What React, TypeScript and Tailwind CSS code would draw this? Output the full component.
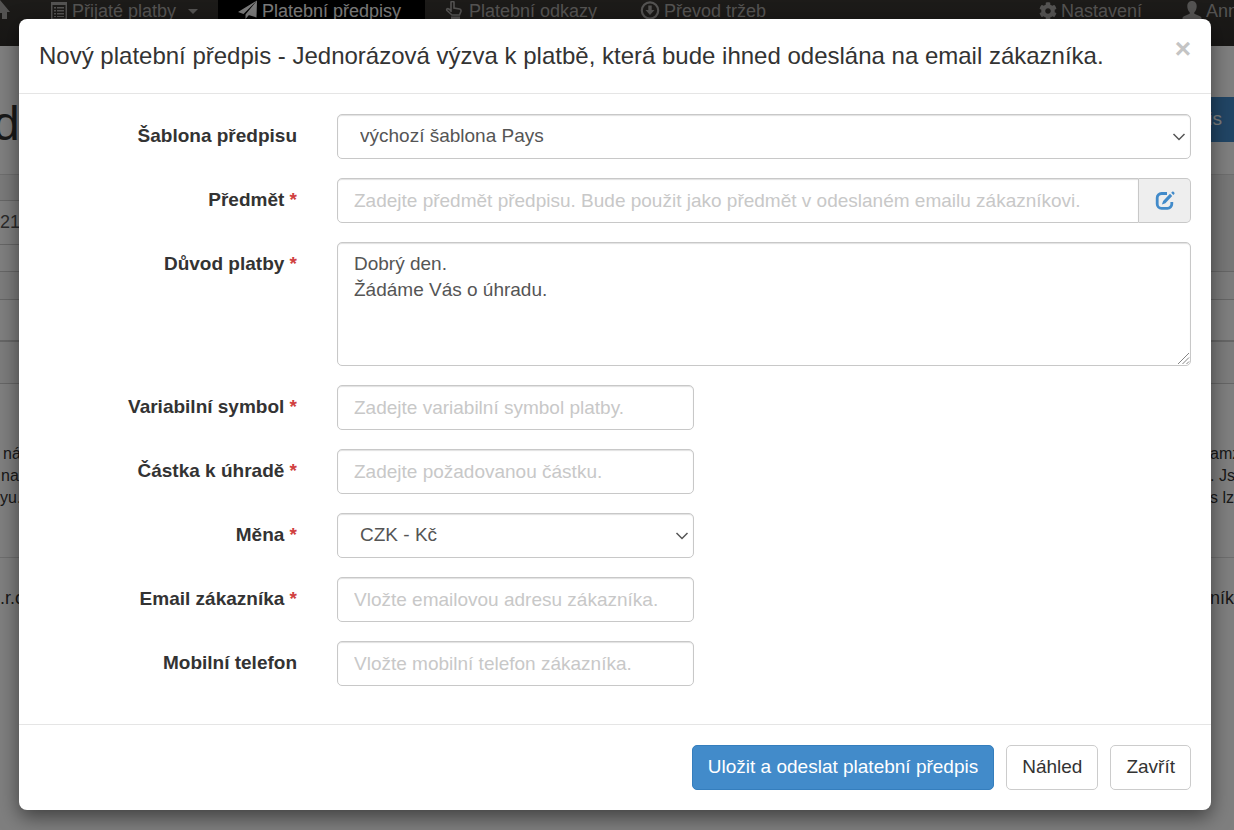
import React from "react";
import { FaCog } from "react-icons/fa";

const control =
  "block w-full h-[45px] rounded-[5px] border border-[#c8c8c8] bg-white px-4 text-[19px] text-[#555] shadow-[inset_0_1px_1px_rgba(0,0,0,0.12)] placeholder:text-[#c8c8c8] placeholder:opacity-100 outline-none focus:border-[#66afe9]";

const button =
  "h-[45px] rounded-[5px] border px-[15px] text-[19px] whitespace-nowrap";

function HomeIcon() {
  return (
    <svg viewBox="0 0 20 20" className="h-5 w-5 fill-current">
      <path d="M10 0 0 12h3v7h5v-6h4v6h5v-7h3z" />
    </svg>
  );
}

function ListIcon() {
  return (
    <svg viewBox="0 0 18 18" className="h-[18px] w-[18px] shrink-0 fill-current">
      <path fillRule="evenodd" d="M1 0h16v18H1zM2.500 3v13.500h13V3z" />
      <path d="M4 5h2v1.500H4zM7 5h7v1.500H7zM4 8h2v1.500H4zM7 8h7v1.500H7zM4 11h2v1.500H4zM7 11h7v1.500H7zM4 14h2v1H4zM7 14h7v1H7z" />
    </svg>
  );
}

function SendIcon() {
  return (
    <svg viewBox="0 0 20 20" className="h-5 w-5 shrink-0 fill-current">
      <path d="M19 0.500 0 12l5.500 2zM19 0.500 7.500 14.500V19l3-3.500zM19 0.500 10.500 15l8 2.500z" />
    </svg>
  );
}

function HandIcon() {
  return (
    <svg viewBox="0 0 20 20" className="h-5 w-5 shrink-0">
      <path
        d="M6 11V1.500C6 0 9 0 9 1.500V7l5.500 1c1.300.3 1.700 1 1.500 2.200L14.500 14H7L2 9.500c-1-1.200.6-2.400 1.700-1.500L6 9.500"
        fill="none"
        stroke="currentColor"
        strokeWidth="1.600"
      />
      <path fill="currentColor" d="M6 15.500h9V19H6z" />
    </svg>
  );
}

function DownloadIcon() {
  return (
    <svg viewBox="0 0 20 20" className="h-5 w-5 shrink-0">
      <circle cx="10" cy="9.500" r="8.200" fill="none" stroke="currentColor" strokeWidth="2.200" />
      <path fill="currentColor" d="M8.300 4.500h3.400V9H14.500L10 14 5.500 9h2.800z" />
    </svg>
  );
}

function UserIcon() {
  return (
    <svg viewBox="0 0 20 20" className="h-5 w-5 shrink-0 fill-current">
      <path d="M10 0c3 0 4.700 2.200 4.700 5.200 0 2.600-1 4.800-2.400 6v1.500l5.700 2.600c1 .5 1.500 1 1.500 2.200v1H.5v-1c0-1.200.5-1.700 1.500-2.200l5.700-2.600v-1.500c-1.400-1.200-2.400-3.400-2.400-6 0-3 1.700-5.200 4.700-5.200z" />
    </svg>
  );
}

function EditIcon() {
  return (
    <svg viewBox="0 0 20 20" className="h-5 w-5">
      <path
        d="M12 2.500H6.500A4.300 4.300 0 0 0 2.200 6.800v6.200A4.300 4.300 0 0 0 6.500 17.300h6A4.300 4.300 0 0 0 16.800 13v-2"
        fill="none"
        stroke="currentColor"
        strokeWidth="2.800"
      />
      <path fill="currentColor" d="M15 2.800 17.200 5l-6.800 7.300-3.500 1.200 1.200-3.500zM16.200 1.800l1-1c.4-.4.900-.4 1.300 0l.8.8c.4.400.4.900 0 1.300l-1 1z" />
    </svg>
  );
}

function Chevron() {
  return (
    <svg
      viewBox="0 0 14 14"
      className="pointer-events-none absolute top-4 right-[5px] h-[14px] w-[14px]"
    >
      <path d="M1.500 4 7 9.500 12.500 4" fill="none" stroke="#555" strokeWidth="1.500" />
    </svg>
  );
}

function ResizeGrip() {
  return (
    <svg viewBox="0 0 14 14" className="pointer-events-none absolute right-px bottom-px h-[14px] w-[14px]">
      <path d="M2 13 13 2M6.500 13 13 6.500M10.500 13 13 10.500" fill="none" stroke="#777" strokeWidth="0.900" />
    </svg>
  );
}

function Row({
  id,
  label,
  required,
  wide,
  children,
}: {
  id: string;
  label: string;
  required?: boolean;
  wide?: boolean;
  children: React.ReactNode;
}) {
  return (
    <div className="flex">
      <label
        htmlFor={id}
        className="w-3/12 px-5 pt-[9px] text-right text-[19px] leading-[26px] font-bold text-[#333]"
      >
        {label}
        {required && <span className="text-[#d04040]"> *</span>}
      </label>
      <div className={wide ? "w-9/12 px-5" : "w-4/12 px-5"}>{children}</div>
    </div>
  );
}

function BackgroundPage() {
  return (
    <div aria-hidden="true" className="absolute inset-0 overflow-hidden bg-white text-[#333]">
      <nav className="flex h-[46px] items-start justify-between bg-gradient-to-b from-[#3a3733] to-[#302e2b] text-[18px] leading-[22px] whitespace-nowrap text-[#a8a6a4]">
        <div className="flex h-full">
          <span className="-ml-[10px] w-[60px]"><HomeIcon /></span>
          <span className="flex h-[22px] w-[168px] items-center gap-1">
            <ListIcon />
            Přijaté platby
            <i className="ml-2 border-x-[5px] border-t-[5px] border-x-transparent border-t-current" />
          </span>
          <span className="flex h-full w-[207px] items-start gap-1 bg-black pl-5 text-[#f5f5f5]">
            <SendIcon />
            Platební předpisy
          </span>
          <span className="flex h-[22px] w-[195px] items-center gap-1 pl-5">
            <HandIcon />
            Platební odkazy
          </span>
          <span className="flex h-[22px] items-center gap-1 pl-5">
            <DownloadIcon />
            Převod tržeb
          </span>
        </div>
        <div className="-mr-1 flex">
          <span className="flex h-[22px] items-center gap-1 pr-10">
            <FaCog className="h-[18px] w-[18px]" />
            Nastavení
          </span>
          <span className="flex h-[22px] items-center gap-1">
            <UserIcon />
            Ann
          </span>
        </div>
      </nav>
      <div className="flex h-[129px] items-start justify-between border-b border-[#ddd] pt-[51px]">
        <span className="-mt-2 -ml-[7px] text-[48px] leading-[70px]">d</span>
        <span className="flex h-[45px] w-20 items-center justify-end bg-[#428bca] pr-3 text-[19px] text-white">
          is
        </span>
      </div>
      <div className="flex h-[97px] justify-between border-b border-[#ccc]">
        <div className="w-1/2">
          <div className="h-[26px] border-b border-[#ccc] bg-[#f5f5f5]" />
          <div className="flex h-[44px] items-center border-b border-[#ccc] text-[18px] text-[#555]">21</div>
        </div>
        <div className="w-1/2 bg-[#eee]" />
      </div>
      <div className="h-7 border-b border-[#ccc] bg-[#f9f9f9]" />
      <div className="h-[42px] border-b-2 border-[#ccc]" />
      <div className="h-[42px] border-b border-[#ccc] bg-[#f9f9f9]" />
      <div className="flex h-[174px] justify-between border-b border-[#ddd] pt-[59px] text-[16px] leading-[22px] whitespace-pre">
        <div>
          <p className="pl-[3px]">ná</p>
          <p className="pl-[1px]">na</p>
          <p>yu.</p>
        </div>
        <div className="w-6">
          <p>amz</p>
          <p>. Js</p>
          <p>s lz</p>
        </div>
      </div>
      <div className="flex justify-between pt-[27px] text-[18px] leading-[26px]">
        <span>.r.o</span>
        <span className="w-6">ník</span>
      </div>
    </div>
  );
}

export default function App() {
  return (
    <div className="relative min-h-screen font-['Liberation_Sans',Arial,sans-serif]">
      <BackgroundPage />
      <div className="relative min-h-screen bg-black/50 pt-[19px] pr-[23px] pb-5 pl-[19px]">
        <form
          role="dialog"
          aria-labelledby="dialog-title"
          onSubmit={(e) => e.preventDefault()}
          className="rounded-lg bg-white shadow-[0_7px_20px_rgba(0,0,0,0.5)]"
        >
          <header className="flex items-start justify-between border-b border-[#e5e5e5] px-5 pt-5 pb-5">
            <h4 id="dialog-title" className="text-[24px] leading-[34px] text-[#333]">
              Nový platební předpis - Jednorázová výzva k platbě, která bude ihned odeslána na email zákazníka.
            </h4>
            <button type="button" aria-label="Zavřít okno" className="text-[28px] leading-5 font-bold text-[#c4c4c4]">
              ×
            </button>
          </header>

          <div className="flex flex-col gap-[19px] pt-5 pb-[38px]">
            <Row id="template" label="Šablona předpisu" wide>
              <div className="relative">
                <select id="template" className={control + " appearance-none pl-[22px]"}>
                  <option>výchozí šablona Pays</option>
                </select>
                <Chevron />
              </div>
            </Row>
            <Row id="subject" label="Předmět" required wide>
              <div className="flex">
                <input
                  id="subject"
                  className={control + " rounded-r-none"}
                  placeholder="Zadejte předmět předpisu. Bude použit jako předmět v odeslaném emailu zákazníkovi."
                />
                <button
                  type="button"
                  aria-label="Upravit předmět"
                  className="flex h-[45px] w-[52px] shrink-0 items-center justify-center rounded-r-[5px] border border-l-0 border-[#c8c8c8] bg-[#eee] text-[#428bca]"
                >
                  <EditIcon />
                </button>
              </div>
            </Row>
            <Row id="reason" label="Důvod platby" required wide>
              <div className="relative">
                <textarea
                  id="reason"
                  defaultValue={"Dobrý den.\nŽádáme Vás o úhradu."}
                  className="block h-[124px] w-full resize-y rounded-[5px] border border-[#c8c8c8] bg-white px-4 py-2 text-[19px] leading-[26px] text-[#555] shadow-[inset_0_1px_1px_rgba(0,0,0,0.12)] outline-none [&::-webkit-resizer]:bg-transparent"
                />
                <ResizeGrip />
              </div>
            </Row>
            <Row id="symbol" label="Variabilní symbol" required>
              <input id="symbol" className={control} placeholder="Zadejte variabilní symbol platby." />
            </Row>
            <Row id="amount" label="Částka k úhradě" required>
              <input id="amount" className={control} placeholder="Zadejte požadovanou částku." />
            </Row>
            <Row id="currency" label="Měna" required>
              <div className="relative">
                <select id="currency" className={control + " appearance-none pl-[22px]"}>
                  <option>CZK - Kč</option>
                </select>
                <Chevron />
              </div>
            </Row>
            <Row id="email" label="Email zákazníka" required>
              <input id="email" type="email" className={control} placeholder="Vložte emailovou adresu zákazníka." />
            </Row>
            <Row id="phone" label="Mobilní telefon">
              <input id="phone" type="tel" className={control} placeholder="Vložte mobilní telefon zákazníka." />
            </Row>
          </div>

          <footer className="flex justify-end gap-3 border-t border-[#e5e5e5] p-5">
            <button type="submit" className={button + " border-[#357ebd] bg-[#428bca] text-white"}>
              Uložit a odeslat platební předpis
            </button>
            <button type="button" className={button + " border-[#ccc] bg-white text-[#333]"}>
              Náhled
            </button>
            <button type="button" className={button + " border-[#ccc] bg-white text-[#333]"}>
              Zavřít
            </button>
          </footer>
        </form>
      </div>
    </div>
  );
}
